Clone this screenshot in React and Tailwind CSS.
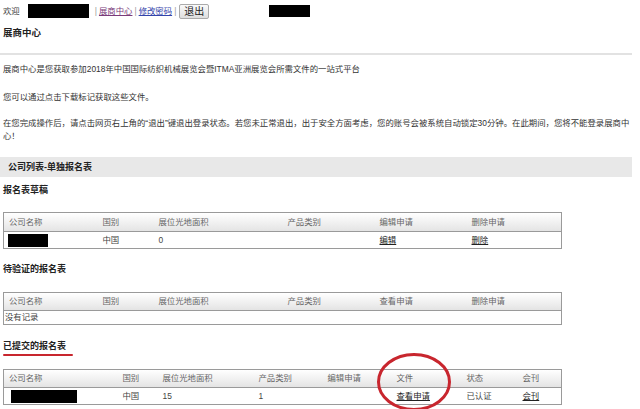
import React from "react";

const FONT = { fontFamily: '"Liberation Sans", "Noto Sans CJK SC", sans-serif' };

const Th = ({ children }) => (
  <th className="text-left font-normal text-[#666] pl-[5px] py-0 whitespace-nowrap">{children}</th>
);
const Td = ({ children }) => <td className="pl-[5px] py-0 whitespace-nowrap text-[#444]">{children}</td>;
const Lnk = ({ children }) => <a className="underline text-[#222] cursor-pointer">{children}</a>;
const Redacted = ({ w }) => <span className={`inline-block bg-black align-middle h-[13px] ${w}`} />;

const HEAD = "h-[19px] bg-gradient-to-b from-white to-[#e4e4e4] border-b border-[#9a9a9a]";

export default function App() {
  return (
    <div className="w-[640px] h-[409px] overflow-hidden bg-white text-[#333] text-[8.4px] leading-[13px]" style={FONT}>
      {/* top bar */}
      <div className="flex items-center h-[16px] mt-[3px] pl-[3px]">
        <span className="text-[#444]">欢迎</span>
        <span className="inline-block bg-black w-[61px] h-[14px] ml-[8px]" />
        <span className="ml-[6px] text-[#999]">|</span>
        <a className="ml-[2px] underline text-[#7a3b7a] cursor-pointer">展商中心</a>
        <span className="ml-[2px] text-[#999]">|</span>
        <a className="ml-[2px] underline text-[#3344aa] cursor-pointer">修改密码</a>
        <span className="ml-[2px] text-[#999]">|</span>
        <button className="ml-[3px] h-[15px] px-[4px] border border-[#aaa] rounded-[2px] bg-gradient-to-b from-[#fafafa] to-[#dedede] text-[10px] leading-[13px] text-[#222]">
          退出
        </button>
        <span className="inline-block bg-black w-[41px] h-[12px] ml-[60px]" />
      </div>

      <div className="mt-[7px] pl-[3px] font-bold text-[9.5px] leading-[14px] text-[#222]">展商中心</div>
      <div className="mt-[13px] w-[632px] border-t-2 border-[#e2e2e2]" />

      <p className="mt-[8px] pl-[3px]">展商中心是您获取参加2018年中国国际纺织机械展览会暨ITMA亚洲展览会所需文件的一站式平台</p>
      <p className="mt-[15px] pl-[3px]">您可以通过点击下载标记获取这些文件。</p>
      <p className="mt-[13px] pl-[3px] w-[632px]">
        在您完成操作后，请点击网页右上角的“退出”键退出登录状态。若您未正常退出，出于安全方面考虑，您的账号会被系统自动锁定30分钟。在此期间，您将不能登录展商中心！
      </p>

      <div className="mt-[14px] w-[632px] h-[20px] bg-[#e8e8e8] flex items-center pl-[8px] font-bold text-[9px] text-[#222]">
        公司列表-单独报名表
      </div>

      <div className="mt-[6px] pl-[3px] font-bold text-[9px] leading-[14px] text-[#222]">报名表草稿</div>
      <table className="mt-[15px] ml-[3px] w-[558px] table-fixed border-collapse border border-[#9a9a9a]">
        <colgroup>
          <col className="w-[94px]" /><col className="w-[56px]" /><col className="w-[129px]" />
          <col className="w-[92px]" /><col className="w-[92px]" /><col className="w-[95px]" />
        </colgroup>
        <thead>
          <tr className={HEAD}>
            <Th>公司名称</Th><Th>国别</Th><Th>展位光地面积</Th><Th>产品类别</Th><Th>编辑申请</Th><Th>删除申请</Th>
          </tr>
        </thead>
        <tbody>
          <tr className="h-[17px]">
            <td className="pl-[4px]"><Redacted w="w-[40px]" /></td>
            <Td>中国</Td><Td>0</Td><Td></Td><Td><Lnk>编辑</Lnk></Td><Td><Lnk>删除</Lnk></Td>
          </tr>
        </tbody>
      </table>

      <div className="mt-[13px] pl-[3px] font-bold text-[9px] leading-[14px] text-[#222]">待验证的报名表</div>
      <table className="mt-[16px] ml-[3px] w-[558px] table-fixed border-collapse border border-[#9a9a9a]">
        <colgroup>
          <col className="w-[94px]" /><col className="w-[56px]" /><col className="w-[129px]" />
          <col className="w-[92px]" /><col className="w-[92px]" /><col className="w-[95px]" />
        </colgroup>
        <thead>
          <tr className="h-[18px] bg-gradient-to-b from-white to-[#e4e4e4] border-b border-[#9a9a9a]">
            <Th>公司名称</Th><Th>国别</Th><Th>展位光地面积</Th><Th>产品类别</Th><Th>查看申请</Th><Th>删除申请</Th>
          </tr>
        </thead>
        <tbody>
          <tr className="h-[13px]">
            <td colSpan={6} className="pl-[1px] text-[#444]">没有记录</td>
          </tr>
        </tbody>
      </table>

      <div className="mt-[14px] pl-[3px] font-bold text-[9px] leading-[14px] text-[#222]">已提交的报名表</div>
      <div className="mt-[1px] ml-[3px] w-[70px] h-[2px] bg-[#c8262e] rounded-full" />

      <div className="relative mt-[13px] ml-[3px] w-[558px]">
        <table className="w-[558px] table-fixed border-collapse border border-[#9a9a9a]">
          <colgroup>
            <col className="w-[114px]" /><col className="w-[40px]" /><col className="w-[96px]" /><col className="w-[69px]" />
            <col className="w-[69px]" /><col className="w-[70px]" /><col className="w-[56px]" /><col className="w-[44px]" />
          </colgroup>
          <thead>
            <tr className="h-[18px] bg-gradient-to-b from-white to-[#e4e4e4] border-b border-[#9a9a9a]">
              <Th>公司名称</Th><Th>国别</Th><Th>展位光地面积</Th><Th>产品类别</Th><Th>编辑申请</Th><Th>文件</Th><Th>状态</Th><Th>会刊</Th>
            </tr>
          </thead>
          <tbody>
            <tr className="h-[17px]">
              <td className="pl-[7px]"><Redacted w="w-[66px]" /></td>
              <Td>中国</Td><Td>15</Td><Td>1</Td><Td></Td><Td><Lnk>查看申请</Lnk></Td><Td>已认证</Td><Td><Lnk>会刊</Lnk></Td>
            </tr>
          </tbody>
        </table>
        <svg className="absolute left-[373px] top-[-17px]" width="76" height="60" viewBox="0 0 76 60">
          <ellipse cx="38" cy="30" rx="35.5" ry="27.5" fill="none" stroke="#c8262e" strokeWidth="3" />
        </svg>
      </div>
    </div>
  );
}
